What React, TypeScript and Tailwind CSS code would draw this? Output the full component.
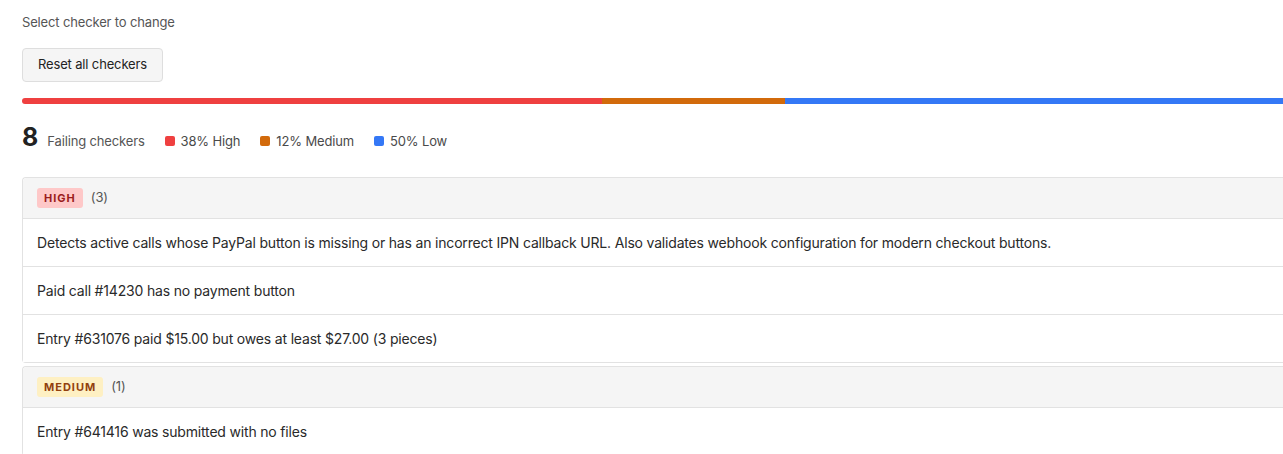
import React from "react";

const font = { fontFamily: 'Inter, "Noto Sans", sans-serif' };

function Badge({ label, cls }: { label: string; cls: string }) {
  return (
    <span className={`inline-flex h-[20px] items-center rounded-[3px] px-[7px] text-[11px] font-bold tracking-[1px] ${cls}`}>
      {label}
    </span>
  );
}

function Group({ label, cls, count, rows }: { label: string; cls: string; count: number; rows: string[] }) {
  return (
    <div className="rounded-l-[4px] border border-r-0 border-[#e2e2e2]">
      <div className="flex h-[40px] items-center gap-[8px] rounded-tl-[4px] bg-[#f5f5f5] pl-[14px]">
        <Badge label={label} cls={cls} />
        <span className="text-[13px] tracking-[-0.15px] text-[#555]">({count})</span>
      </div>
      {rows.map((r, i) => (
        <div
          key={i}
          className="flex h-[48px] items-center border-t border-[#e2e2e2] bg-white pl-[14px] text-[14px] tracking-[-0.18px] text-[#2a2a2a]"
        >
          {r}
        </div>
      ))}
    </div>
  );
}

function Legend({ color, label }: { color: string; label: string }) {
  return (
    <span className="ml-[20px] flex items-baseline gap-[6px] text-[13px] tracking-[-0.15px] text-[#4a4a4a]">
      <span className={`inline-block h-[10px] w-[10px] rounded-[2px] ${color}`} />
      {label}
    </span>
  );
}

export default function App() {
  return (
    <div className="h-[454px] w-full overflow-hidden bg-white" style={font}>
      <div className="w-[1548px] pl-[22px] pt-[12px]">
        <div className="h-[20px] text-[13px] leading-[20px] tracking-[-0.15px] text-[#555]">Select checker to change</div>
        <button className="mt-[16px] h-[34px] rounded-[4px] border border-[#dedede] bg-[#f5f5f5] px-[15px] text-[13px] tracking-[-0.15px] text-[#222]">
          Reset all checkers
        </button>
        <div className="mt-[16px] flex h-[6px] w-[1526px] overflow-hidden rounded-l-full">
          <div className="w-[38%] bg-[#ef4040]" />
          <div className="w-[12%] bg-[#d26a0b]" />
          <div className="w-[50%] bg-[#3478f6]" />
        </div>
        <div className="mt-[19px] flex h-[28px] items-baseline">
          <span className="text-[25px] font-bold leading-[28px] text-[#222]">8</span>
          <span className="ml-[9px] text-[13px] tracking-[-0.15px] text-[#555]">Failing checkers</span>
          <Legend color="bg-[#ef4040]" label="38% High" />
          <Legend color="bg-[#d26a0b]" label="12% Medium" />
          <Legend color="bg-[#3478f6]" label="50% Low" />
        </div>
        <div className="mt-[26px] w-[1526px]">
          <Group
            label="HIGH"
            cls="bg-[#fec8c8] text-[#9b1c1c]"
            count={3}
            rows={[
              "Detects active calls whose PayPal button is missing or has an incorrect IPN callback URL. Also validates webhook configuration for modern checkout buttons.",
              "Paid call #14230 has no payment button",
              "Entry #631076 paid $15.00 but owes at least $27.00 (3 pieces)",
            ]}
          />
          <div className="mt-[3px]">
            <Group
              label="MEDIUM"
              cls="bg-[#fef0c3] text-[#92400e]"
              count={1}
              rows={["Entry #641416 was submitted with no files"]}
            />
          </div>
        </div>
      </div>
    </div>
  );
}
